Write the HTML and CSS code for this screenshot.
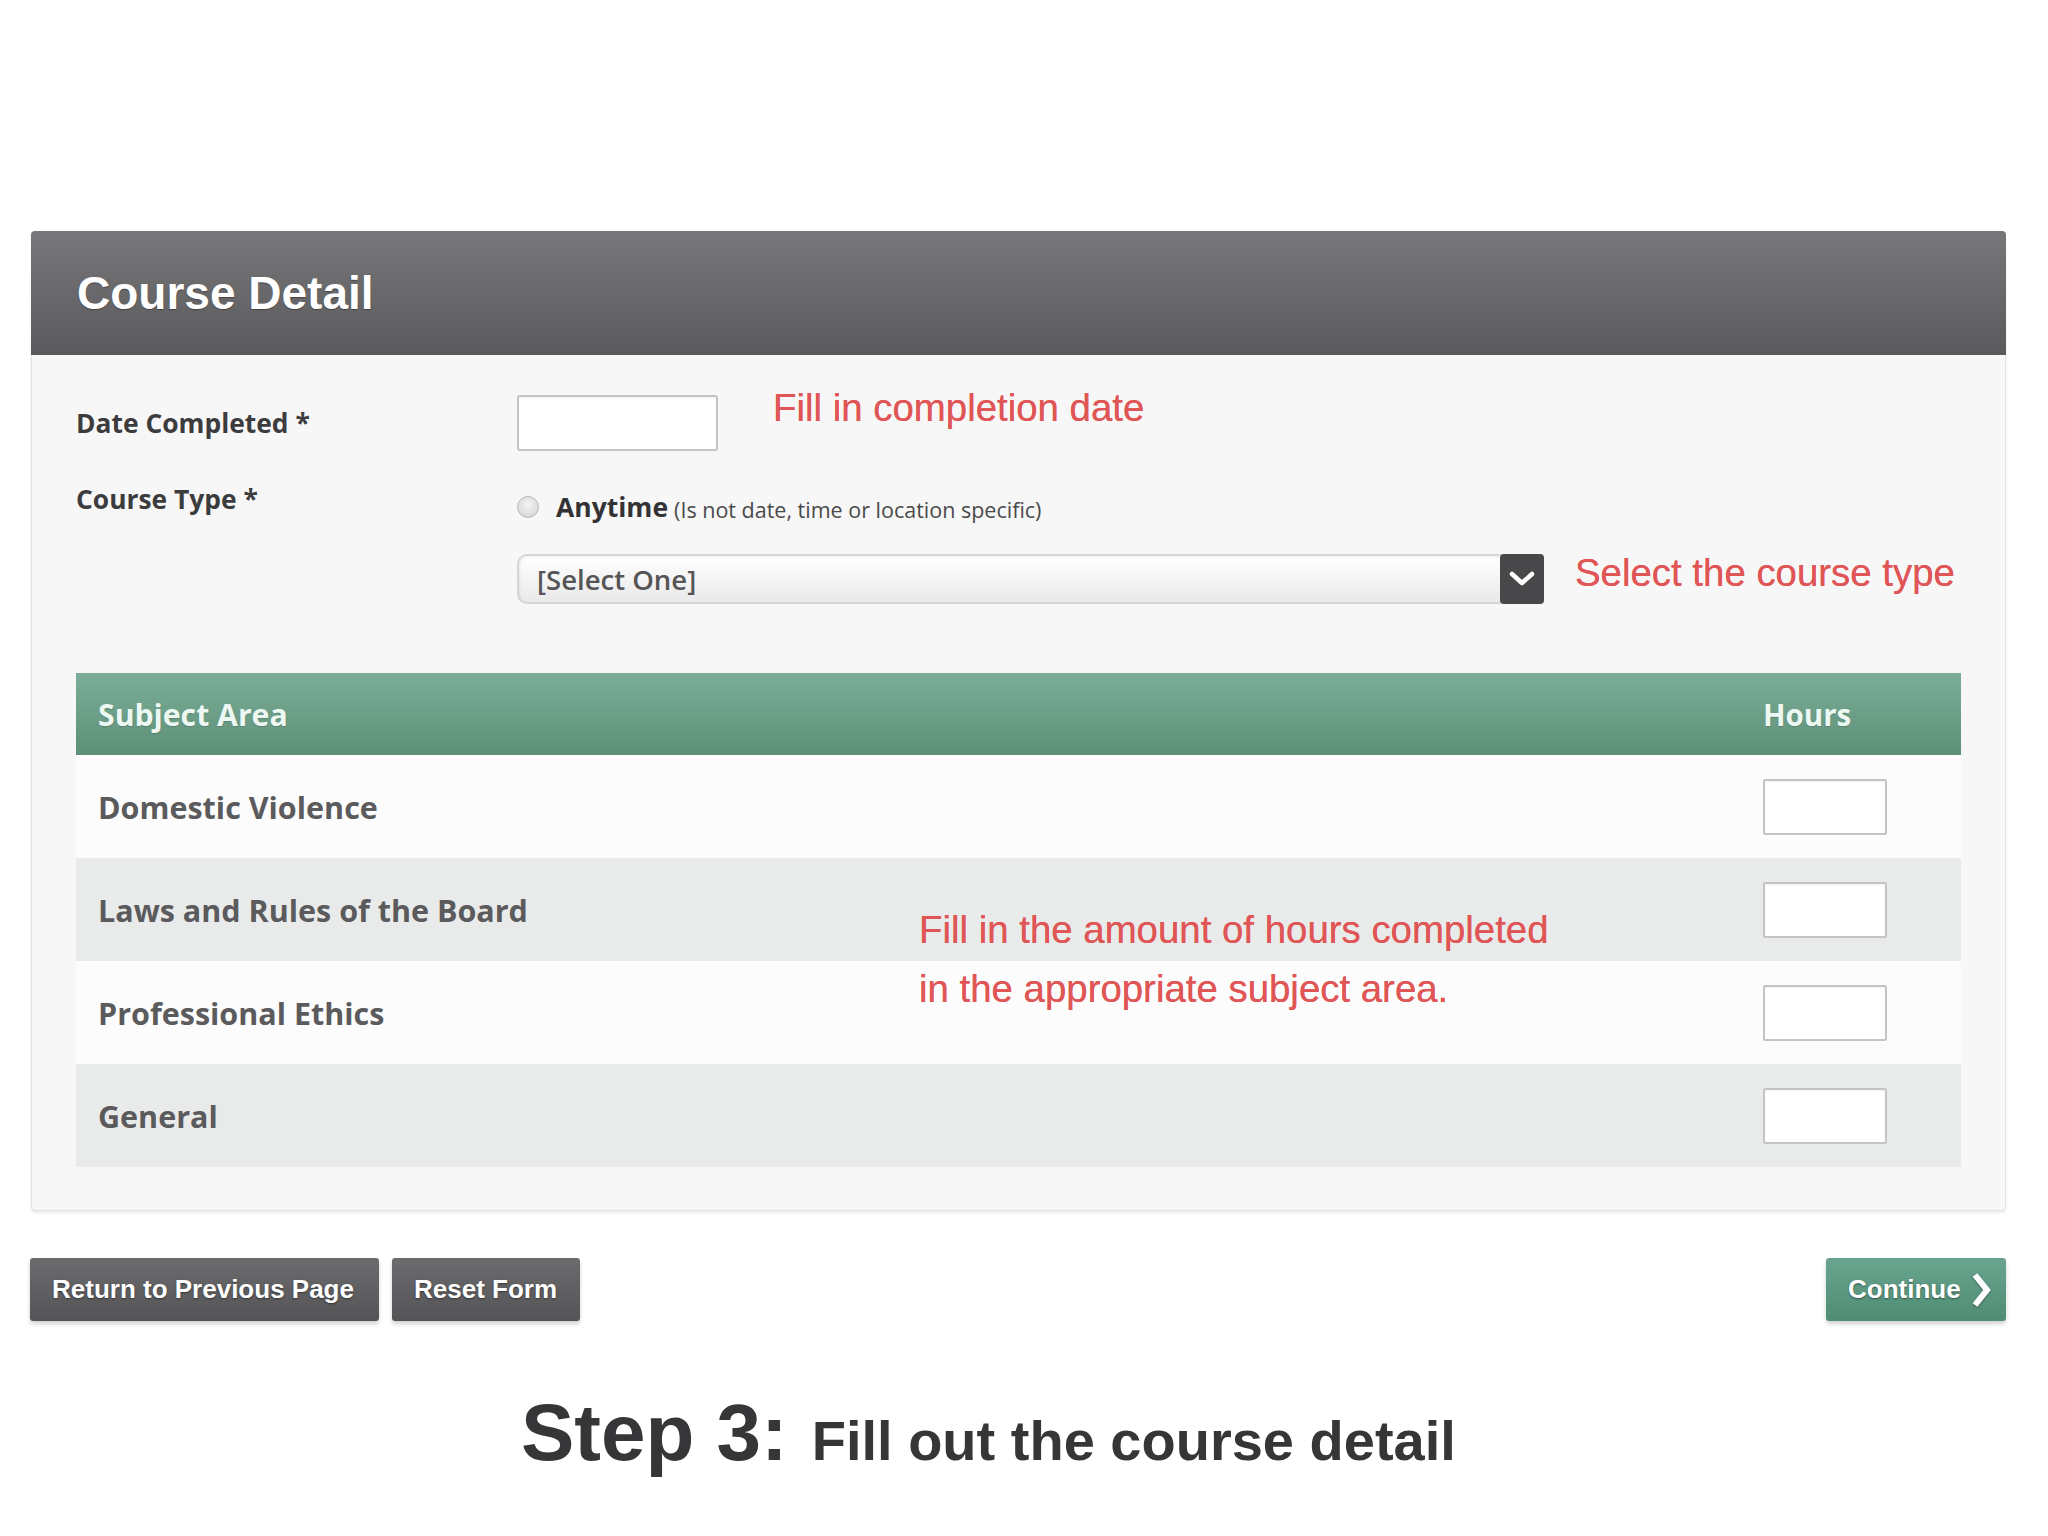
FILE: index.html
```html
<!DOCTYPE html>
<html lang="en">
<head>
<meta charset="utf-8">
<title>Course Detail</title>
<link rel="stylesheet" href="styles.css">
</head>
<body>
<div class="page">
  <section class="panel">
    <header class="panel-head"><h1 class="panel-title">Course Detail</h1></header>
    <div class="panel-body">
      <div class="row-date">
        <label class="field-label">Date Completed *</label>
        <input class="date-input" type="text">
        <span class="note note-date">Fill in completion date</span>
      </div>
      <div class="row-type">
        <label class="field-label">Course Type *</label>
        <div class="type-controls">
          <div class="radio-line">
            <span class="radio"></span>
            <span class="radio-main">Anytime</span>
            <span class="radio-sub">(Is not date, time or location specific)</span>
          </div>
          <div class="select-line">
            <div class="select">
              <span class="select-text">[Select One]</span>
              <span class="select-btn">
                <svg width="26" height="18" viewBox="0 0 26 18"><polyline points="3,4 13,13 23,4" fill="none" stroke="#ffffff" stroke-width="4.5" stroke-linecap="round" stroke-linejoin="round"/></svg>
              </span>
            </div>
            <span class="note note-type">Select the course type</span>
          </div>
        </div>
      </div>
      <div class="table-wrap">
        <table class="subjects">
          <thead>
            <tr><th class="col-subject">Subject Area</th><th class="col-hours">Hours</th></tr>
          </thead>
          <tbody>
            <tr><td class="col-subject">Domestic Violence</td><td class="col-hours"><input class="hours-input" type="text"></td></tr>
            <tr class="alt"><td class="col-subject">Laws and Rules of the Board</td><td class="col-hours"><input class="hours-input" type="text"></td></tr>
            <tr><td class="col-subject">Professional Ethics</td><td class="col-hours"><input class="hours-input" type="text"></td></tr>
            <tr class="alt"><td class="col-subject">General</td><td class="col-hours"><input class="hours-input" type="text"></td></tr>
          </tbody>
        </table>
        <div class="note note-hours">Fill in the amount of hours completed<br>in the appropriate subject area.</div>
      </div>
    </div>
  </section>

  <div class="actions">
    <button class="btn btn-dark btn-return">Return to Previous Page</button>
    <button class="btn btn-dark btn-reset">Reset Form</button>
    <button class="btn btn-green btn-continue">Continue
      <svg class="chev" width="22" height="38" viewBox="0 0 22 38"><polyline points="5,4 17,19 5,34" fill="none" stroke="#ffffff" stroke-width="6" stroke-linejoin="miter"/></svg>
    </button>
  </div>

  <div class="caption">
    <span class="cap-step">Step 3:</span>
    <span class="cap-text">Fill out the course detail</span>
  </div>
</div>
</body>
</html>
```

FILE: styles.css
```css
* { box-sizing: border-box; }

html, body {
  margin: 0;
  padding: 0;
  background: #ffffff;
}

body {
  font-family: "Open Sans", "Liberation Sans", Arial, sans-serif;
  width: 2048px;
  height: 1536px;
  overflow: hidden;
}

.page {
  padding: 231px 42px 0 30px;
}

/* ---------- panel ---------- */
.panel {
  margin-left: 1px;
  background: #f7f7f7;
  border: 1px solid #e2e2e2;
  border-radius: 4px;
  box-shadow: 0 2px 3px rgba(0, 0, 0, 0.08);
}

.panel-head {
  height: 124px;
  margin: -1px -1px 0 -1px;
  border-radius: 4px 4px 0 0;
  background: linear-gradient(#777779, #5a5a5c);
  display: flex;
  align-items: center;
  padding-left: 46px;
}

.panel-title {
  margin: 0;
  font-family: "Liberation Sans", Arial, sans-serif;
  font-weight: bold;
  font-size: 46px;
  color: #ffffff;
  text-shadow: 0 1px 1px rgba(0, 0, 0, 0.35);
}

.panel-body {
  padding: 40px 44px 43px 44px;
}

.field-label {
  flex: 0 0 441px;
  width: 441px;
  font-size: 26.4px;
  font-weight: 700;
  line-height: 30px;
  color: #3c3c3e;
}

.row-date {
  display: flex;
  align-items: center;
  height: 56px;
}

.date-input {
  width: 201px;
  height: 56px;
  border: 2px solid #c4c4c4;
  border-radius: 3px;
  background: #ffffff;
  box-shadow: inset 0 1px 2px rgba(0, 0, 0, 0.06);
  margin: 0;
}

.note {
  font-family: "Liberation Sans", Arial, sans-serif;
  font-size: 38.4px;
  color: #e05656;
  line-height: 1;
  text-shadow: 0 0 0.6px #e05656;
}

.note-date {
  margin-left: 55px;
  align-self: flex-start;
  margin-top: -6px;
}

.row-type {
  display: flex;
  margin-top: 33px;
}

.type-controls {
  flex: 1;
}

.radio-line {
  display: flex;
  align-items: center;
  height: 30px;
  margin-top: 8px;
}

.radio {
  width: 22px;
  height: 22px;
  border-radius: 50%;
  border: 1px solid #b9b9b9;
  background: radial-gradient(circle at 50% 40%, #f4f4f4, #cfcfcf);
  margin-right: 17px;
}

.radio-main {
  font-size: 26.5px;
  font-weight: 700;
  color: #333335;
}

.radio-sub {
  font-size: 21.5px;
  color: #4a4a4a;
  margin-left: 6px;
  margin-top: 4px;
}

.select-line {
  display: flex;
  align-items: center;
  margin-top: 32px;
}

.select {
  width: 1027px;
  height: 50px;
  display: flex;
  align-items: center;
  border: 2px solid #d6d6d6;
  border-radius: 10px 4px 4px 10px;
  background: linear-gradient(#ffffff, #e9e9e9);
  box-shadow: inset 1px 1px 2px rgba(0, 0, 0, 0.08);
}

.select-text {
  flex: 1;
  padding-left: 18px;
  font-size: 27.5px;
  font-weight: 600;
  color: #555557;
}

.select-btn {
  width: 44px;
  height: 50px;
  margin: -2px -2px -2px 0;
  border-radius: 4px;
  background: #48484a;
  display: flex;
  align-items: center;
  justify-content: center;
}

.note-type {
  margin-left: 31px;
  margin-top: -12px;
}

/* ---------- table ---------- */
.table-wrap {
  position: relative;
  margin-top: 69px;
}

.subjects {
  width: 100%;
  border-collapse: collapse;
  border-spacing: 0;
}

.subjects thead tr {
  height: 82px;
  background: linear-gradient(#7bae98, #5d8e78);
}

.subjects th {
  text-align: left;
  font-size: 30.2px;
  font-weight: 700;
  color: #eef8f2;
  text-shadow: 0 1px 1px rgba(0, 0, 0, 0.15);
  padding: 0;
}

.subjects th.col-hours {
  font-size: 29.5px;
}

.subjects tbody tr {
  height: 103px;
  background: #fcfcfc;
}

.subjects tbody tr.alt {
  background: #e9ebeb;
}

.subjects td {
  padding: 0;
  font-size: 30.5px;
  font-weight: 700;
  color: #5b5b5d;
  vertical-align: middle;
}

.col-subject {
  padding-left: 22px !important;
}

.col-hours {
  width: 198px;
}

.hours-input {
  display: block;
  width: 124px;
  height: 56px;
  margin: 0;
  border: 2px solid #c4c4c4;
  border-radius: 2px;
  background: #ffffff;
  box-shadow: inset 0 1px 2px rgba(0, 0, 0, 0.06);
}

.note-hours {
  position: absolute;
  left: 843px;
  top: 227px;
  line-height: 59px;
}

/* ---------- buttons ---------- */
.actions {
  display: flex;
  gap: 13px;
  margin-top: 47px;
}

.btn {
  height: 63px;
  border: none;
  border-radius: 3px;
  padding: 0 22px;
  font-family: "Liberation Sans", Arial, sans-serif;
  font-weight: bold;
  font-size: 26px;
  color: #ffffff;
  text-shadow: 0 1px 2px rgba(0, 0, 0, 0.45);
  display: flex;
  align-items: center;
  box-shadow: 0 3px 4px rgba(0, 0, 0, 0.18);
}

.btn-dark {
  background: linear-gradient(#6c6c6e, #545456);
}

.btn-return { width: 349px; }
.btn-reset { width: 188px; }

.btn-green {
  margin-left: auto;
  width: 180px;
  padding-right: 12px;
  background: linear-gradient(#6aa58f, #4f8c74);
}

.chev {
  margin-left: 9px;
  filter: drop-shadow(0 1px 1px rgba(0, 0, 0, 0.35));
}

/* ---------- caption ---------- */
.caption {
  display: flex;
  align-items: baseline;
  margin-top: 72px;
  padding-left: 491px;
  font-family: "Liberation Sans", Arial, sans-serif;
  font-weight: bold;
  color: #363638;
  line-height: 1;
}

.cap-step {
  font-size: 80px;
}

.cap-text {
  font-size: 56px;
  margin-left: 24px;
}
```
